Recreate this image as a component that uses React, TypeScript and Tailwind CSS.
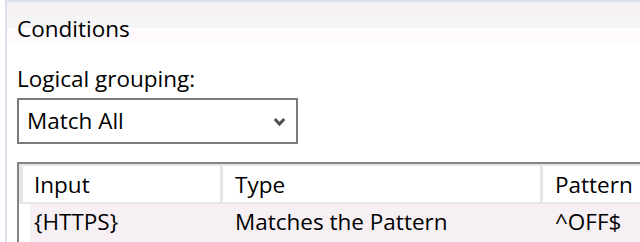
import React from "react";

export default function App() {
  const font = { fontFamily: '"Open Sans", "Noto Sans", sans-serif' };
  return (
    <div className="w-[640px] h-[242px] overflow-hidden bg-white pl-[5px] text-black" style={font}>
      <div className="h-full border-l-2 border-t-2 border-[#dce2ea] flex flex-col">
        <div className="h-[41px] shrink-0 pl-[10px] pt-[15px] text-[22.5px] leading-[24px] bg-[linear-gradient(to_bottom,#f6f1f5_0px,#f6f1f5_14px,#f5f5f5_14px,#f5f5f5_26px,#fefafe_26px,#fefafe_41px)]">
          Conditions
        </div>
        <div className="mt-[24px] pl-[10px] text-[22.5px] leading-[24px]">Logical grouping:</div>
        <div className="mt-[7px] ml-[10px] w-[281px] h-[46px] shrink-0 border-2 border-[#7a7a7a] flex items-center justify-between pl-[8px] pr-[10px] text-[22.5px] leading-[24px]">
          <span>Match All</span>
          <svg width="13" height="10" viewBox="0 0 13 10" className="mt-[2px]">
            <path d="M1.8 2 L6.5 7 L11.2 2" fill="none" stroke="#505050" strokeWidth="3" strokeLinejoin="miter" />
          </svg>
        </div>
        <div className="mt-[18px] ml-[10px] w-[760px] shrink-0 border-l-2 border-t-2 border-[#848484] text-[22.5px] leading-[24px] flex-1">
          <div className="flex bg-[#e6e6e6] pl-[4px] pt-[2px] pb-[2px] gap-[3px]">
            <div className="w-[197px] shrink-0 h-[36px] bg-white pl-[11px] pt-[7px]">Input</div>
            <div className="w-[317px] shrink-0 h-[36px] bg-white pl-[12px] pt-[7px]">Type</div>
            <div className="w-[200px] shrink-0 h-[36px] bg-white pl-[12px] pt-[7px]">Pattern</div>
          </div>
          <div className="ml-[11px] flex bg-[#f6f0f4] h-[38px] pt-[6px]">
            <div className="w-[193px] shrink-0 pl-[4px]">{"{HTTPS}"}</div>
            <div className="w-[320px] shrink-0 pl-[12px]">Matches the Pattern</div>
            <div className="w-[200px] shrink-0 pl-[12px]">^OFF$</div>
          </div>
        </div>
      </div>
    </div>
  );
}
